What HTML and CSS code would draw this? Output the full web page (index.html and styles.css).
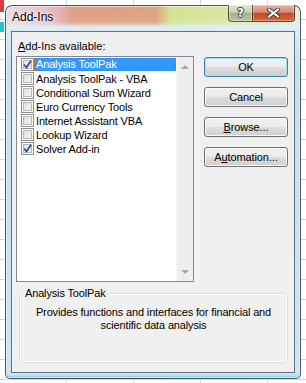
FILE: index.html
```html
<!DOCTYPE html>
<html lang="en">
<head>
  <meta charset="UTF-8" />
  <title>Add-Ins</title>
  <link rel="stylesheet" href="styles.css">
</head>
<body>
  <div class="window">
    <div class="titlebar">
      <span class="title">Add-Ins</span>
      <div class="caption-buttons">
        <span class="cap help">?</span>
        <span class="cap close">
          <svg width="13" height="10" viewBox="0 0 13 10">
            <path d="M2 1.5 L11 8.5 M11 1.5 L2 8.5" stroke="#3a3a3a" stroke-width="4" stroke-linecap="square" />
            <path d="M2 1.5 L11 8.5 M11 1.5 L2 8.5" stroke="#fff" stroke-width="2" stroke-linecap="square" />
          </svg>
        </span>
      </div>
    </div>

    <div class="client">
      <div class="avail"><u>A</u>dd-Ins available:</div>

      <div class="main">
        <div class="listbox">
          <ul class="items">
            <li class="item selected">
              <span class="check"><svg width="9" height="9" viewBox="0 0 9 9"><path d="M1 4.5 L3.5 7.5 L8 0.8" fill="none" stroke="#324a8c" stroke-width="1.7"/></svg></span>
              <span class="name">Analysis ToolPak</span>
            </li>
            <li class="item"><span class="check"></span><span class="name">Analysis ToolPak - VBA</span></li>
            <li class="item"><span class="check"></span><span class="name">Conditional Sum Wizard</span></li>
            <li class="item"><span class="check"></span><span class="name">Euro Currency Tools</span></li>
            <li class="item"><span class="check"></span><span class="name">Internet Assistant VBA</span></li>
            <li class="item"><span class="check"></span><span class="name">Lookup Wizard</span></li>
            <li class="item">
              <span class="check"><svg width="9" height="9" viewBox="0 0 9 9"><path d="M1 4.5 L3.5 7.5 L8 0.8" fill="none" stroke="#324a8c" stroke-width="1.7"/></svg></span>
              <span class="name">Solver Add-in</span>
            </li>
          </ul>
          <div class="scrollbar">
            <span class="arrow up"></span>
            <span class="arrow down"></span>
          </div>
        </div>

        <div class="buttons">
          <button type="button" class="btn default">OK</button>
          <button type="button" class="btn">Cancel</button>
          <button type="button" class="btn"><u>B</u>rowse...</button>
          <button type="button" class="btn">A<u>u</u>tomation...</button>
        </div>
      </div>

      <div class="group">
        <span class="legend">Analysis ToolPak</span>
        <p class="desc">Provides functions and interfaces for financial and<br>scientific data analysis</p>
      </div>
    </div>
  </div>
</body>
</html>
```

FILE: styles.css
```css
body {
  margin: 0;
  width: 306px;
  height: 383px;
  overflow: hidden;
  font-family: "Liberation Sans", Arial, sans-serif;
  font-size: 11px;
  color: #000;
  background-color: #fff;
  background-image:
    linear-gradient(#d83c3c, #d83c3c),
    linear-gradient(#2cc4cc, #2cc4cc),
    repeating-linear-gradient(to bottom, transparent 0 19px, #d0d7e5 19px 20px),
    repeating-linear-gradient(to right, transparent 0 66px, #d0d7e5 66px 67px);
  background-size: 4px 12px, 4px 10px, auto, auto;
  background-position: 0 0, 0 22px, 0 0, 0 0;
  background-repeat: no-repeat, no-repeat, repeat, repeat;
}

.window {
  margin: 5px 0 0 5px;
  width: 296px;
  height: 374px;
  box-sizing: border-box;
  display: flex;
  flex-direction: column;
  padding: 0 5px 5px;
  border: 1px solid rgba(30, 40, 50, 0.75);
  border-radius: 7px 7px 5px 5px;
  box-shadow: inset 0 0 0 1px rgba(255, 255, 255, 0.6), inset 0 -2px 2px rgba(60, 200, 240, 0.6);
  background:
    linear-gradient(to bottom, rgba(226, 242, 250, 0) 0, rgba(226, 242, 250, 0.1) 16px, rgba(226, 242, 250, 0.9) 21px, #d8ecf8 25px, #c6e0f2 60px, #cce4f4 100%),
    linear-gradient(to right, #eddde4 0, #e6b4be 50px, #df9c80 68px, #dea07c 150px, #d2e290 164px, #dce6a0 222px, #e6eed6 100%);
}

.titlebar {
  height: 25px;
  display: flex;
  align-items: flex-start;
}

.title {
  padding-left: 1px;
  font-size: 12px;
  line-height: 22px;
  text-shadow: 0 0 5px #fff, 0 0 3px #fff;
}

.caption-buttons {
  margin-left: auto;
  margin-top: -1px;
  display: flex;
}

.cap {
  height: 17px;
  box-sizing: border-box;
  display: flex;
  align-items: center;
  justify-content: center;
  border: 1px solid rgba(40, 40, 40, 0.75);
  border-top: none;
  box-shadow: inset 0 0 0 1px rgba(255, 255, 255, 0.35);
}

.help {
  width: 24px;
  border-radius: 0 0 0 4px;
  border-right: none;
  background: linear-gradient(#e2e6d2 0, #cbd0b4 45%, #a8ae8a 52%, #bcc49c 100%);
  color: #fff;
  font-family: "DejaVu Sans", sans-serif;
  font-weight: bold;
  font-size: 12px;
  text-shadow: 1px 0 #3a3a3a, -1px 0 #3a3a3a, 0 1px #3a3a3a, 0 -1px #3a3a3a;
}

.close {
  width: 43px;
  border-radius: 0 0 4px 0;
  background: linear-gradient(#eab0a2 0, #da8a76 45%, #c2482c 52%, #d4683e 100%);
}

.client {
  flex: 1;
  border: 1px solid #67717c;
  background: #f0f0f0;
}

.avail {
  margin: 7px 0 0 6px;
  line-height: 15px;
}

.main {
  display: flex;
  margin-top: 2px;
}

.listbox {
  margin-left: 4px;
  width: 178px;
  height: 226px;
  box-sizing: border-box;
  border: 1px solid #828790;
  background: #fff;
  display: flex;
}

.items {
  flex: 1;
  list-style: none;
  margin: 0;
  padding: 1px 0 0;
}

.item {
  display: flex;
  align-items: flex-start;
  height: 14px;
}

.check {
  width: 13px;
  height: 13px;
  margin-left: 4px;
  box-sizing: border-box;
  display: flex;
  align-items: center;
  justify-content: center;
  border: 1px solid #8e8f8f;
  background: linear-gradient(135deg, #dcdcdc, #f7f7f7);
  box-shadow: inset 0 0 0 1px #fff, inset 0 0 0 2px #b6b9bc;
}

.name {
  flex: 1;
  height: 14px;
  padding-left: 2px;
  line-height: 14px;
  letter-spacing: -0.15px;
  white-space: nowrap;
}

.item.selected .name {
  height: 13px;
  line-height: 13px;
  background: #3399ff;
  color: #fff;
  outline: 1px dotted #c66600;
  outline-offset: -1px;
}

.scrollbar {
  width: 17px;
  box-sizing: border-box;
  background: #eeeeee;
  border-left: 1px solid #f7f7f7;
  display: flex;
  flex-direction: column;
  justify-content: space-between;
  align-items: center;
  padding: 8px 0 7px;
}

.arrow {
  width: 0;
  height: 0;
  border-left: 4px solid transparent;
  border-right: 4px solid transparent;
}

.arrow.up {
  border-bottom: 4px solid #a6a6a6;
}

.arrow.down {
  border-top: 4px solid #a6a6a6;
}

.buttons {
  margin: 1px 0 0 10px;
  display: flex;
  flex-direction: column;
  gap: 10px;
}

.btn {
  width: 84px;
  height: 20px;
  box-sizing: border-box;
  padding: 0;
  font: inherit;
  letter-spacing: -0.1px;
  color: #000;
  border: 1px solid #707070;
  border-radius: 3px;
  background: linear-gradient(#f2f2f2 0, #ebebeb 48%, #dddddd 52%, #cfcfcf 100%);
  box-shadow: inset 0 0 0 1px rgba(255, 255, 255, 0.8);
}

.btn.default {
  border-color: #3c7fb1;
  box-shadow: inset 0 0 0 1px #a6def6;
}

.group {
  position: relative;
  margin: 11px 0 0 7px;
  width: 269px;
  height: 70px;
  box-sizing: border-box;
  border: 1px solid #d5dfe5;
  border-radius: 3px;
  box-shadow: inset 0 0 0 1px #fff;
}

.legend {
  position: absolute;
  top: -8px;
  left: 4px;
  padding: 0 1px;
  line-height: 15px;
  background: #f0f0f0;
  letter-spacing: -0.15px;
}

.desc {
  margin: 0;
  padding-top: 12px;
  line-height: 13px;
  text-align: center;
  letter-spacing: -0.15px;
}
```
